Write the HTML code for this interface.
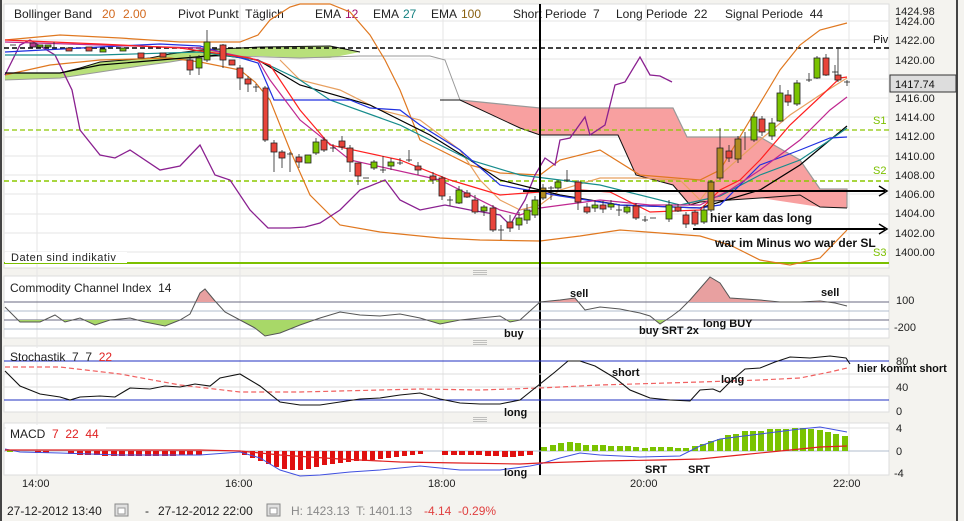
<!DOCTYPE html>
<html><head><meta charset="utf-8"><style>
html,body{margin:0;padding:0;background:#f4f3ef;}
body{width:964px;height:521px;overflow:hidden;position:relative;font-family:"Liberation Sans",Arial,sans-serif;}
svg{position:absolute;left:0;top:0;}
text{white-space:pre;}
</style></head><body>
<svg width="964" height="521" viewBox="0 0 964 521" font-family="Liberation Sans, Arial, sans-serif" xml:space="preserve">
<defs>
<clipPath id="cb"><rect x="4" y="320" width="885" height="18"/></clipPath>
<clipPath id="ct"><rect x="4" y="276" width="885" height="26"/></clipPath>
</defs>
<rect x="0" y="0" width="964" height="521" fill="#f4f3ef"/>
<line x1="1" y1="0" x2="1" y2="521" stroke="#444" stroke-width="2"/>
<line x1="957" y1="0" x2="957" y2="521" stroke="#444" stroke-width="2"/>

<rect x="4" y="4" width="885" height="264" fill="#fff" stroke="#ddd"/>
<rect x="4" y="276" width="885" height="62" fill="#fff" stroke="#ddd"/>
<rect x="4" y="346" width="885" height="66" fill="#fff" stroke="#ddd"/>
<rect x="4" y="423" width="885" height="52" fill="#fff" stroke="#ddd"/>
<g stroke="#aaa" stroke-width="0.7">
<line x1="473" y1="270.5" x2="487" y2="270.5"/><line x1="473" y1="272.5" x2="487" y2="272.5"/><line x1="473" y1="274.5" x2="487" y2="274.5"/>
<line x1="473" y1="340.5" x2="487" y2="340.5"/><line x1="473" y1="342.5" x2="487" y2="342.5"/><line x1="473" y1="344.5" x2="487" y2="344.5"/>
<line x1="473" y1="417.5" x2="487" y2="417.5"/><line x1="473" y1="419.5" x2="487" y2="419.5"/><line x1="473" y1="421.5" x2="487" y2="421.5"/>
</g>

<g stroke="#e6e6e6" stroke-width="1">
<line x1="4" y1="21" x2="889" y2="21"/><line x1="4" y1="40" x2="889" y2="40"/><line x1="4" y1="59" x2="889" y2="59"/><line x1="4" y1="79" x2="889" y2="79"/><line x1="4" y1="98" x2="889" y2="98"/><line x1="4" y1="117" x2="889" y2="117"/><line x1="4" y1="137" x2="889" y2="137"/><line x1="4" y1="156" x2="889" y2="156"/><line x1="4" y1="175" x2="889" y2="175"/><line x1="4" y1="194" x2="889" y2="194"/><line x1="4" y1="214" x2="889" y2="214"/><line x1="4" y1="233" x2="889" y2="233"/><line x1="4" y1="252" x2="889" y2="252"/>
<line x1="37" y1="4" x2="37" y2="475"/><line x1="240" y1="4" x2="240" y2="475"/><line x1="443" y1="4" x2="443" y2="475"/><line x1="646" y1="4" x2="646" y2="475"/><line x1="849" y1="4" x2="849" y2="475"/>
</g>

<g font-size="12" fill="#222">
<text x="14" y="18">Bollinger Band</text><text x="102" y="18" fill="#d2691e">20</text><text x="123" y="18" fill="#d2691e">2.00</text>
<text x="178" y="18">Pivot Punkt  Täglich</text>
<text x="315" y="18">EMA</text><text x="345" y="18" fill="#a0106a">12</text>
<text x="373" y="18">EMA</text><text x="403" y="18" fill="#148080">27</text>
<text x="431" y="18">EMA</text><text x="461" y="18" fill="#8a6010">100</text>
<text x="513" y="18">Short Periode  7</text>
<text x="616" y="18">Long Periode  22</text>
<text x="725" y="18">Signal Periode  44</text>
</g>

<polygon fill="#b8e07a" points="5,73 60,73 80,68 100,62 150,58 170,54 200,50 260,47 330,46 360,52 330,58 300,58 260,56 230,56 200,57 170,62 140,66 100,72 60,78 5,80"/>
<polyline fill="none" stroke="#111" points="5,73 60,73 80,68 100,62 150,58 170,54 200,50 260,47 330,46 360,52"/>
<polyline fill="none" stroke="#999" points="5,80 60,78 100,72 140,66 170,62 200,57 230,56 300,58 360,56 430,56 445,60 460,100"/>
<polygon fill="#f8a0a0" points="460,100 540,108 673,108 687,137 760,137 800,160 820,189 847,189 847,208 820,207 760,198 700,202 690,205 673,185 636,175 618,135 540,135 520,128"/>
<polyline fill="none" stroke="#999" stroke-width="1.2" points="460,100 540,108 673,108 687,137 760,137 800,160 820,189 847,189 847,208"/>
<polyline fill="none" stroke="#111" points="440,100 460,100 520,128 540,135 618,135 636,175 673,185 690,205 700,202 760,198 800,195 820,207 847,208"/>

<line x1="4" y1="48" x2="889" y2="48" stroke="#000" stroke-width="1.5" stroke-dasharray="5,3"/>
<line x1="4" y1="130" x2="889" y2="130" stroke="#8cc800" stroke-width="1.2" stroke-dasharray="5,3"/>
<line x1="4" y1="181" x2="889" y2="181" stroke="#8cc800" stroke-width="1.5" stroke-dasharray="5,3"/>
<line x1="4" y1="263" x2="889" y2="263" stroke="#7cc000" stroke-width="2"/>

<g fill="none" stroke="#e07820" stroke-width="1.2">
<polyline points="5,40 60,35 120,38 180,42 240,42 258,35 270,20 290,7 300,4 330,4 350,12 370,35 385,60 400,90 420,140 440,150 470,165 500,173 540,175 560,160 600,150 640,175 700,180 720,170 750,120 780,70 800,45 820,30 847,23"/>
<polyline points="5,75 50,65 100,60 170,58 200,62 240,70 255,82 270,100 290,150 310,195 340,225 380,232 440,238 480,240 540,241 580,236 620,230 660,233 700,236 730,245 760,260 790,265 820,258 847,230"/>
<polyline points="280,60 300,80 340,90 380,110 420,120 460,150 480,180 500,200 520,210 540,205 560,190 600,178 640,178 680,180 700,200 720,175 760,140 790,115 820,95 847,78" stroke="#e8a060"/>
</g>
<polyline fill="none" stroke="#8a2090" stroke-width="1.3" points="5,75 20,45 30,40 55,55 72,90 80,130 100,155 115,158 130,150 160,170 180,166 200,145 215,175 230,180 250,210 268,228 290,228 305,227 320,223 340,210 360,190 385,180 400,200 420,210 445,205 470,210 500,215 510,225 525,200 535,175 545,158 555,165 560,140 570,138 585,117 590,135 605,125 615,85 625,82 640,57 650,75 660,76 672,82"/>
<g fill="none" stroke-width="1.2">
<polyline stroke="#000" points="5,73 60,73 100,65 160,60 220,55 258,60 300,85 370,105 430,135 470,160 500,180 560,195 620,205 700,208 760,190 800,165 830,140 847,126"/>
<polyline stroke="#178c8c" points="5,55 100,55 200,52 258,60 300,80 330,100 400,125 470,160 520,175 600,185 680,205 720,196 760,175 800,160 830,140 847,128"/>
<polyline stroke="#2030e0" points="5,52 100,47 160,44 200,46 258,63 274,100 350,100 370,108 400,110 420,125 460,150 500,185 560,196 620,205 700,208 720,205 760,165 800,150 830,138 847,137"/>
<polyline stroke="#c02890" points="5,42 100,45 200,48 258,60 270,80 300,120 350,160 440,180 500,210 520,215 540,208 600,200 650,205 700,205 730,190 760,170 800,140 830,110 847,97"/>
<polyline stroke="#ff2020" points="5,40 100,44 180,48 250,58 270,65 300,110 330,145 400,160 450,180 500,195 540,192 580,190 610,192 650,212 700,210 720,190 740,180 760,160 790,125 820,97 840,78 847,77"/>
</g>

<g stroke="#222" stroke-width="0.8">
<line x1="207" y1="30" x2="207" y2="62"/><rect x="204" y="42" width="6" height="18" fill="#7ac300"/>
<line x1="190" y1="55" x2="190" y2="75"/><rect x="187" y="60" width="6" height="10" fill="#e8443a"/>
<line x1="199" y1="55" x2="199" y2="75"/><rect x="196" y="58" width="6" height="10" fill="#7ac300"/>
<line x1="223" y1="44" x2="223" y2="68"/><rect x="220" y="45" width="6" height="15" fill="#e8443a"/>
<rect x="229" y="60" width="6" height="5" fill="#e8443a"/>
<line x1="240" y1="65" x2="240" y2="90"/><rect x="237" y="68" width="6" height="10" fill="#e8443a"/>
<line x1="248" y1="76" x2="248" y2="92"/><rect x="245" y="79" width="6" height="5" fill="#e8443a"/>
<line x1="253" y1="87" x2="259" y2="87"/><line x1="256" y1="84" x2="256" y2="92"/>
<line x1="265" y1="86" x2="265" y2="142"/><rect x="263" y="88" width="5" height="52" fill="#e8443a"/>
<line x1="274" y1="140" x2="274" y2="172"/><rect x="271" y="143" width="6" height="9" fill="#e8443a"/>
<line x1="282" y1="150" x2="282" y2="168"/><rect x="279" y="152" width="6" height="6" fill="#e8443a"/>
<line x1="287" y1="154" x2="293" y2="154"/><line x1="290" y1="152" x2="290" y2="172"/>
<line x1="299" y1="154" x2="299" y2="168"/><rect x="296" y="157" width="6" height="5" fill="#e8443a"/>
<rect x="305" y="155" width="6" height="8" fill="#7ac300"/>
<line x1="316" y1="138" x2="316" y2="155"/><rect x="313" y="142" width="6" height="11" fill="#7ac300"/>
<line x1="324" y1="137" x2="324" y2="152"/><rect x="321" y="140" width="6" height="10" fill="#e8443a"/>
<line x1="330" y1="148" x2="336" y2="148"/><line x1="333" y1="144" x2="333" y2="152"/>
<line x1="342" y1="136" x2="342" y2="150"/><rect x="339" y="141" width="6" height="6" fill="#e8443a"/>
<line x1="350" y1="145" x2="350" y2="172"/><rect x="347" y="148" width="6" height="14" fill="#e8443a"/>
<line x1="358" y1="163" x2="358" y2="185"/><rect x="355" y="163" width="6" height="13" fill="#e8443a"/>
<line x1="363" y1="178" x2="369" y2="178"/>
<line x1="374" y1="160" x2="374" y2="170"/><rect x="371" y="162" width="6" height="6" fill="#7ac300"/>
<line x1="380" y1="170" x2="386" y2="170"/><line x1="383" y1="156" x2="383" y2="173"/>
<line x1="391" y1="158" x2="391" y2="170"/><rect x="388" y="162" width="6" height="4" fill="#7ac300"/>
<line x1="397" y1="163" x2="403" y2="163"/><line x1="400" y1="158" x2="400" y2="165"/>
<line x1="406" y1="160" x2="412" y2="160"/><line x1="409" y1="150" x2="409" y2="162"/>
<line x1="418" y1="162" x2="418" y2="175"/><rect x="415" y="166" width="6" height="4" fill="#e8443a"/>
<line x1="433" y1="172" x2="433" y2="184"/><rect x="430" y="176" width="6" height="4" fill="#e8443a"/>
<line x1="442" y1="176" x2="442" y2="200"/><rect x="439" y="178" width="6" height="18" fill="#e8443a"/>
<line x1="447" y1="200" x2="453" y2="200"/><line x1="450" y1="196" x2="450" y2="206"/>
<line x1="459" y1="186" x2="459" y2="204"/><rect x="456" y="190" width="6" height="13" fill="#7ac300"/>
<line x1="467" y1="190" x2="467" y2="198"/><rect x="464" y="193" width="6" height="4" fill="#e8443a"/>
<line x1="475" y1="195" x2="475" y2="214"/><rect x="472" y="200" width="6" height="12" fill="#e8443a"/>
<line x1="484" y1="205" x2="484" y2="216"/><rect x="481" y="207" width="6" height="4" fill="#7ac300"/>
<line x1="493" y1="205" x2="493" y2="232"/><rect x="490" y="208" width="6" height="22" fill="#e8443a"/>
<line x1="498" y1="230" x2="504" y2="230"/><line x1="501" y1="225" x2="501" y2="240"/>
<line x1="510" y1="215" x2="510" y2="232"/><rect x="507" y="222" width="6" height="6" fill="#e8443a"/>
<line x1="519" y1="212" x2="519" y2="230"/><rect x="516" y="218" width="6" height="7" fill="#7ac300"/>
<line x1="527" y1="204" x2="527" y2="224"/><rect x="524" y="210" width="6" height="10" fill="#7ac300"/>
<line x1="535" y1="196" x2="535" y2="218"/><rect x="532" y="200" width="6" height="15" fill="#7ac300"/>
<line x1="543" y1="184" x2="543" y2="200"/><rect x="540" y="188" width="6" height="10" fill="#b08a20"/>
<line x1="548" y1="188" x2="554" y2="188"/><line x1="551" y1="186" x2="551" y2="200"/>
<line x1="558" y1="180" x2="558" y2="192"/><rect x="555" y="182" width="6" height="6" fill="#7ac300"/>
<line x1="564" y1="180" x2="570" y2="180"/><line x1="567" y1="170" x2="567" y2="182"/>
<line x1="578" y1="180" x2="578" y2="210"/><rect x="575" y="182" width="6" height="20" fill="#e8443a"/>
<line x1="587" y1="203" x2="587" y2="214"/><rect x="584" y="207" width="6" height="5" fill="#e8443a"/>
<line x1="595" y1="200" x2="595" y2="212"/><rect x="592" y="205" width="6" height="3" fill="#7ac300"/>
<line x1="603" y1="201" x2="603" y2="213"/><rect x="600" y="205" width="6" height="4" fill="#e8443a"/>
<line x1="611" y1="200" x2="611" y2="210"/><rect x="608" y="204" width="6" height="3" fill="#7ac300"/>
<line x1="616" y1="210" x2="622" y2="210"/><line x1="619" y1="205" x2="619" y2="216"/>
<line x1="627" y1="205" x2="627" y2="214"/><rect x="624" y="207" width="6" height="5" fill="#7ac300"/>
<line x1="636" y1="203" x2="636" y2="220"/><rect x="633" y="206" width="6" height="12" fill="#e8443a"/>
<line x1="642" y1="220" x2="648" y2="220"/><line x1="645" y1="216" x2="645" y2="222"/>
<line x1="650" y1="218" x2="656" y2="218"/>
<line x1="669" y1="200" x2="669" y2="222"/><rect x="666" y="205" width="6" height="14" fill="#7ac300"/>
<line x1="678" y1="204" x2="678" y2="212"/><rect x="675" y="207" width="6" height="4" fill="#e8443a"/>
<line x1="686" y1="212" x2="686" y2="228"/><rect x="683" y="215" width="6" height="9" fill="#e8443a"/>
<line x1="695" y1="210" x2="695" y2="226"/><rect x="692" y="212" width="6" height="12" fill="#e8443a"/>
<line x1="704" y1="205" x2="704" y2="224"/><rect x="701" y="210" width="6" height="12" fill="#7ac300"/>
<line x1="711" y1="180" x2="711" y2="212"/><rect x="708" y="182" width="6" height="28" fill="#b08a20"/>
<line x1="720" y1="128" x2="720" y2="180"/><rect x="717" y="148" width="6" height="30" fill="#b08a20"/>
<line x1="729" y1="145" x2="729" y2="162"/><rect x="726" y="151" width="6" height="7" fill="#e8443a"/>
<line x1="738" y1="136" x2="738" y2="163"/><rect x="735" y="139" width="6" height="20" fill="#b08a20"/>
<line x1="745" y1="132" x2="745" y2="150"/>
<line x1="754" y1="112" x2="754" y2="142"/><rect x="751" y="117" width="6" height="23" fill="#7ac300"/>
<line x1="762" y1="116" x2="762" y2="136"/><rect x="759" y="119" width="6" height="13" fill="#e8443a"/>
<line x1="772" y1="118" x2="772" y2="140"/><rect x="769" y="123" width="6" height="13" fill="#7ac300"/>
<line x1="780" y1="85" x2="780" y2="122"/><rect x="777" y="93" width="6" height="28" fill="#7ac300"/>
<line x1="788" y1="90" x2="788" y2="106"/><rect x="785" y="95" width="6" height="7" fill="#e8443a"/>
<line x1="797" y1="80" x2="797" y2="106"/><rect x="794" y="83" width="6" height="21" fill="#7ac300"/>
<line x1="806" y1="80" x2="812" y2="80"/><line x1="809" y1="73" x2="809" y2="82"/>
<line x1="817" y1="56" x2="817" y2="79"/><rect x="814" y="58" width="6" height="20" fill="#7ac300"/>
<line x1="826" y1="54" x2="826" y2="76"/><rect x="823" y="58" width="6" height="17" fill="#e8443a"/>
<line x1="832" y1="72" x2="838" y2="72"/><line x1="835" y1="65" x2="835" y2="80"/>
<line x1="838" y1="47" x2="838" y2="82"/><rect x="835" y="75" width="6" height="5" fill="#e8443a"/>
<line x1="844" y1="82" x2="850" y2="82"/><line x1="847" y1="80" x2="847" y2="86"/>
<line x1="10" y1="45" x2="16" y2="45"/><rect x="30" y="43" width="6" height="4" fill="#b83a90"/>
<rect x="37" y="45" width="6" height="2" fill="#7ac300"/><rect x="45" y="45" width="6" height="2" fill="#7ac300"/>
<rect x="66" y="48" width="6" height="3" fill="#e8443a"/><rect x="86" y="47" width="6" height="4" fill="#e8443a"/>
<rect x="100" y="49" width="6" height="3" fill="#7ac300"/><rect x="120" y="48" width="6" height="3" fill="#7ac300"/>
<rect x="138" y="53" width="6" height="5" fill="#e8443a"/><rect x="160" y="53" width="6" height="4" fill="#e8443a"/>
<line x1="54" y1="42" x2="54" y2="48"/>
</g>

<line x1="540" y1="4" x2="540" y2="475" stroke="#000" stroke-width="2"/>
<line x1="523" y1="191" x2="885" y2="191" stroke="#000" stroke-width="2"/>
<polyline points="879,186 887,191 879,196" fill="none" stroke="#000" stroke-width="1.5"/>
<line x1="693" y1="229" x2="885" y2="229" stroke="#000" stroke-width="2"/>
<polyline points="879,224 887,229 879,234" fill="none" stroke="#000" stroke-width="1.5"/>

<g font-size="12" font-weight="bold" fill="#111">
<text x="710" y="222">hier kam das long</text>
<text x="715" y="247">war im Minus wo war der SL</text>
</g>
<text x="873" y="43" font-size="11" fill="#111">Piv</text>
<g font-size="11" fill="#7cc000">
<text x="873" y="124">S1</text><text x="873" y="174">S2</text><text x="873" y="256">S3</text>
</g>
<rect x="5" y="252" width="122" height="11" fill="#fff"/>
<text x="11" y="261" font-size="11" fill="#222" letter-spacing="0.5">Daten sind indikativ</text>

<g font-size="11" fill="#222">
<text x="895" y="15">1424.98</text><text x="895" y="25">1424.00</text><text x="895" y="44">1422.00</text><text x="895" y="64">1420.00</text>
<text x="895" y="102">1416.00</text><text x="895" y="121">1414.00</text><text x="895" y="140">1412.00</text><text x="895" y="160">1410.00</text>
<text x="895" y="179">1408.00</text><text x="895" y="198">1406.00</text><text x="895" y="217">1404.00</text><text x="895" y="237">1402.00</text><text x="895" y="256">1400.00</text>
</g>
<rect x="890" y="75" width="66" height="17" fill="#ddd" stroke="#333"/>
<text x="895" y="88" font-size="11" fill="#111">1417.74</text>

<g stroke-width="1">
<line x1="4" y1="302" x2="889" y2="302" stroke="#6a6a80"/>
<line x1="4" y1="311" x2="889" y2="311" stroke="#b0bccc"/>
<line x1="4" y1="320" x2="889" y2="320" stroke="#6a6a80"/>
<line x1="4" y1="329" x2="889" y2="329" stroke="#b0bccc"/>
</g>
<g clip-path="url(#cb)"><polygon fill="#a8d868" points="5,307 20,322 40,322 55,315 65,322 80,318 95,325 110,320 130,318 145,322 165,326 180,320 190,314 200,293 215,301 225,312 240,320 255,328 265,336 280,333 300,325 320,318 340,312 360,315 380,316 400,314 420,318 440,324 460,320 480,318 500,316 510,322 520,320 540,302 560,300 575,298 585,310 600,307 620,309 640,313 650,316 660,324 672,316 680,310 690,300 710,277 720,283 730,298 760,300 780,302 800,302 820,301 835,303 847,306 847,320 5,320"/></g>
<g clip-path="url(#ct)"><polygon fill="#e8a0a0" points="5,307 20,322 40,322 55,315 65,322 80,318 95,325 110,320 130,318 145,322 165,326 180,320 190,314 200,293 205,289 215,301 225,312 240,320 255,328 265,336 280,333 300,325 320,318 340,312 360,315 380,316 400,314 420,318 440,324 460,320 480,318 500,316 510,322 520,320 540,302 560,300 575,298 585,310 600,307 620,309 640,313 650,316 660,324 672,316 680,310 690,300 710,277 720,283 730,298 760,300 780,302 800,302 820,301 835,303 847,306 847,302 5,302"/></g>
<polyline fill="none" stroke="#555" stroke-width="1" points="5,307 20,322 40,322 55,315 65,322 80,318 95,325 110,320 130,318 145,322 165,326 180,320 190,314 200,293 205,289 215,301 225,312 240,320 255,328 265,336 280,333 300,325 320,318 340,312 360,315 380,316 400,314 420,318 440,324 460,320 480,318 500,316 510,322 520,320 540,302 560,300 575,298 585,310 600,307 620,309 640,313 650,316 660,324 672,316 680,310 690,300 710,277 720,283 730,298 760,300 780,302 800,302 820,301 835,303 847,306"/>
<text x="10" y="292" font-size="12" fill="#222">Commodity Channel Index  14</text>
<g font-size="11" font-weight="bold" fill="#111">
<text x="570" y="297">sell</text><text x="821" y="296">sell</text>
<text x="504" y="337">buy</text><text x="639" y="334">buy SRT 2x</text><text x="703" y="327">long BUY</text>
</g>
<g font-size="11" fill="#222"><text x="896" y="304">100</text><text x="894" y="331">-200</text></g>

<line x1="4" y1="361" x2="889" y2="361" stroke="#2030c0"/>
<line x1="4" y1="400" x2="889" y2="400" stroke="#2030c0"/>
<line x1="4" y1="387" x2="889" y2="387" stroke="#dcdcdc"/>
<line x1="4" y1="374" x2="889" y2="374" stroke="#dcdcdc"/>
<rect x="6" y="348" width="115" height="12" fill="#fff"/>
<text x="10" y="361" font-size="12" fill="#222">Stochastik  7  7  <tspan fill="#e02020">22</tspan></text>
<polyline fill="none" stroke="#f06060" stroke-width="1.2" stroke-dasharray="5,3" points="5,367 60,367 120,374 180,385 240,392 300,392 420,389 480,390 540,388 600,385 700,382 760,380 800,378 830,372 847,368"/>
<polyline fill="none" stroke="#111" stroke-width="1.1" points="5,371 20,386 40,394 60,397 70,400 80,397 100,396 115,397 130,388 150,389 165,386 180,387 195,384 210,386 220,378 240,374 260,386 280,402 300,405 320,405 340,402 360,399 380,398 400,395 420,393 440,399 460,403 480,404 500,404 520,400 540,384 555,372 568,361 580,361 595,366 615,378 630,390 650,398 670,400 690,401 700,390 713,389 720,392 730,382 745,369 760,368 775,362 790,357 810,358 830,356 846,358 850,364"/>
<g font-size="11" font-weight="bold" fill="#111">
<text x="612" y="376">short</text><text x="721" y="383">long</text><text x="504" y="416">long</text><text x="857" y="372">hier kommt short</text>
</g>
<g font-size="11" fill="#222"><text x="896" y="365">80</text><text x="896" y="391">40</text><text x="896" y="415">0</text></g>

<line x1="4" y1="451" x2="889" y2="451" stroke="#b0bccc"/>
<line x1="4" y1="428" x2="889" y2="428" stroke="#e0e0e0"/>
<g fill="#e01010">
<rect x="35" y="451" width="6" height="2"/><rect x="43" y="451" width="6" height="2"/><rect x="68" y="451" width="6" height="3"/><rect x="77" y="451" width="6" height="4"/><rect x="85" y="451" width="6" height="4"/><rect x="94" y="451" width="6" height="4"/><rect x="102" y="451" width="6" height="5"/><rect x="111" y="451" width="6" height="5"/><rect x="119" y="451" width="6" height="5"/><rect x="128" y="451" width="6" height="5"/><rect x="136" y="451" width="6" height="5"/><rect x="145" y="451" width="6" height="5"/><rect x="153" y="451" width="6" height="5"/><rect x="162" y="451" width="6" height="5"/><rect x="170" y="451" width="6" height="5"/><rect x="179" y="451" width="6" height="4"/><rect x="187" y="451" width="6" height="4"/><rect x="196" y="451" width="6" height="4"/>
<rect x="242" y="451" width="5" height="4"/><rect x="250" y="451" width="5" height="7"/><rect x="258" y="451" width="5" height="10"/><rect x="266" y="451" width="5" height="13"/><rect x="274" y="451" width="5" height="16"/><rect x="282" y="451" width="5" height="18"/><rect x="290" y="451" width="5" height="19"/><rect x="298" y="451" width="5" height="19"/><rect x="306" y="451" width="5" height="18"/><rect x="314" y="451" width="5" height="16"/><rect x="322" y="451" width="5" height="14"/><rect x="330" y="451" width="5" height="13"/><rect x="338" y="451" width="5" height="12"/><rect x="346" y="451" width="5" height="11"/><rect x="354" y="451" width="5" height="10"/><rect x="362" y="451" width="5" height="10"/><rect x="370" y="451" width="5" height="9"/><rect x="378" y="451" width="5" height="8"/><rect x="386" y="451" width="5" height="7"/><rect x="394" y="451" width="5" height="6"/><rect x="402" y="451" width="5" height="5"/><rect x="410" y="451" width="5" height="4"/><rect x="418" y="451" width="5" height="3"/>
<rect x="442" y="451" width="6" height="4"/><rect x="451" y="451" width="6" height="4"/><rect x="459" y="451" width="6" height="4"/><rect x="468" y="451" width="6" height="4"/><rect x="476" y="451" width="6" height="4"/><rect x="485" y="451" width="6" height="5"/><rect x="493" y="451" width="6" height="5"/><rect x="502" y="451" width="6" height="6"/><rect x="510" y="451" width="6" height="6"/><rect x="518" y="451" width="6" height="5"/><rect x="527" y="451" width="6" height="4"/>
</g>
<g fill="#7ac300">
<rect x="7" y="450" width="6" height="2"/>
<rect x="541" y="447" width="6" height="4"/><rect x="550" y="445" width="6" height="6"/><rect x="558" y="443" width="6" height="8"/><rect x="567" y="442" width="6" height="9"/><rect x="575" y="443" width="6" height="8"/><rect x="583" y="445" width="6" height="6"/><rect x="592" y="445" width="6" height="6"/><rect x="600" y="445" width="6" height="6"/><rect x="608" y="446" width="6" height="5"/><rect x="617" y="446" width="6" height="5"/><rect x="625" y="446" width="6" height="5"/><rect x="633" y="447" width="6" height="4"/><rect x="642" y="448" width="6" height="3"/><rect x="650" y="447" width="6" height="4"/><rect x="658" y="447" width="6" height="4"/><rect x="667" y="447" width="6" height="4"/><rect x="675" y="448" width="6" height="3"/><rect x="683" y="448" width="6" height="3"/><rect x="692" y="446" width="6" height="5"/><rect x="700" y="444" width="6" height="7"/><rect x="708" y="441" width="6" height="10"/><rect x="717" y="439" width="6" height="12"/><rect x="725" y="435" width="6" height="16"/><rect x="733" y="434" width="6" height="17"/><rect x="742" y="431" width="6" height="20"/><rect x="750" y="431" width="6" height="20"/><rect x="758" y="431" width="6" height="20"/><rect x="767" y="429" width="6" height="22"/><rect x="775" y="429" width="6" height="22"/><rect x="783" y="429" width="6" height="22"/><rect x="792" y="428" width="6" height="23"/><rect x="800" y="428" width="6" height="23"/><rect x="808" y="429" width="6" height="22"/><rect x="817" y="430" width="6" height="21"/><rect x="825" y="432" width="6" height="19"/><rect x="833" y="434" width="6" height="17"/><rect x="842" y="436" width="6" height="15"/>
</g>
<polyline fill="none" stroke="#4050e0" stroke-width="1" points="5,449 20,452 60,453 120,455 200,455 240,452 260,458 280,470 300,476 320,475 350,472 380,470 420,466 460,470 500,470 530,466 540,464 560,458 580,453 600,455 640,457 680,456 700,446 720,439 760,434 800,429 820,427 847,432"/>
<polyline fill="none" stroke="#e02020" stroke-width="1.2" points="5,450 100,450 200,450 240,451 280,455 340,459 400,462 460,463 520,464 540,463 600,461 660,460 700,459 740,455 780,451 820,447 847,446"/>
<rect x="6" y="425" width="100" height="14" fill="#fff"/>
<text x="10" y="438" font-size="12" fill="#222">MACD  <tspan fill="#e02020">7  22  44</tspan></text>
<g font-size="11" font-weight="bold" fill="#111"><text x="504" y="476">long</text><text x="645" y="473">SRT</text><text x="688" y="473">SRT</text></g>
<g font-size="11" fill="#222"><text x="896" y="432">4</text><text x="896" y="455">0</text><text x="894" y="477">-4</text></g>

<g font-size="11" fill="#222">
<text x="22" y="487">14:00</text><text x="225" y="487">16:00</text><text x="428" y="487">18:00</text><text x="630" y="487">20:00</text><text x="833" y="487">22:00</text>
</g>

<g font-size="12" fill="#222">
<text x="7" y="515">27-12-2012 13:40</text>
<rect x="115" y="504" width="13" height="12" fill="#e0e0e0" stroke="#888"/><rect x="118" y="508" width="7" height="6" fill="#fff" stroke="#999"/>
<text x="145" y="515">-</text>
<text x="158" y="515">27-12-2012 22:00</text>
<rect x="267" y="504" width="13" height="12" fill="#e0e0e0" stroke="#888"/><rect x="270" y="508" width="7" height="6" fill="#fff" stroke="#999"/>
<text x="291" y="515" fill="#888">H: 1423.13  T: 1401.13</text>
<text x="424" y="515" fill="#e04040">-4.14  -0.29%</text>
</g>
</svg>
</body></html>
